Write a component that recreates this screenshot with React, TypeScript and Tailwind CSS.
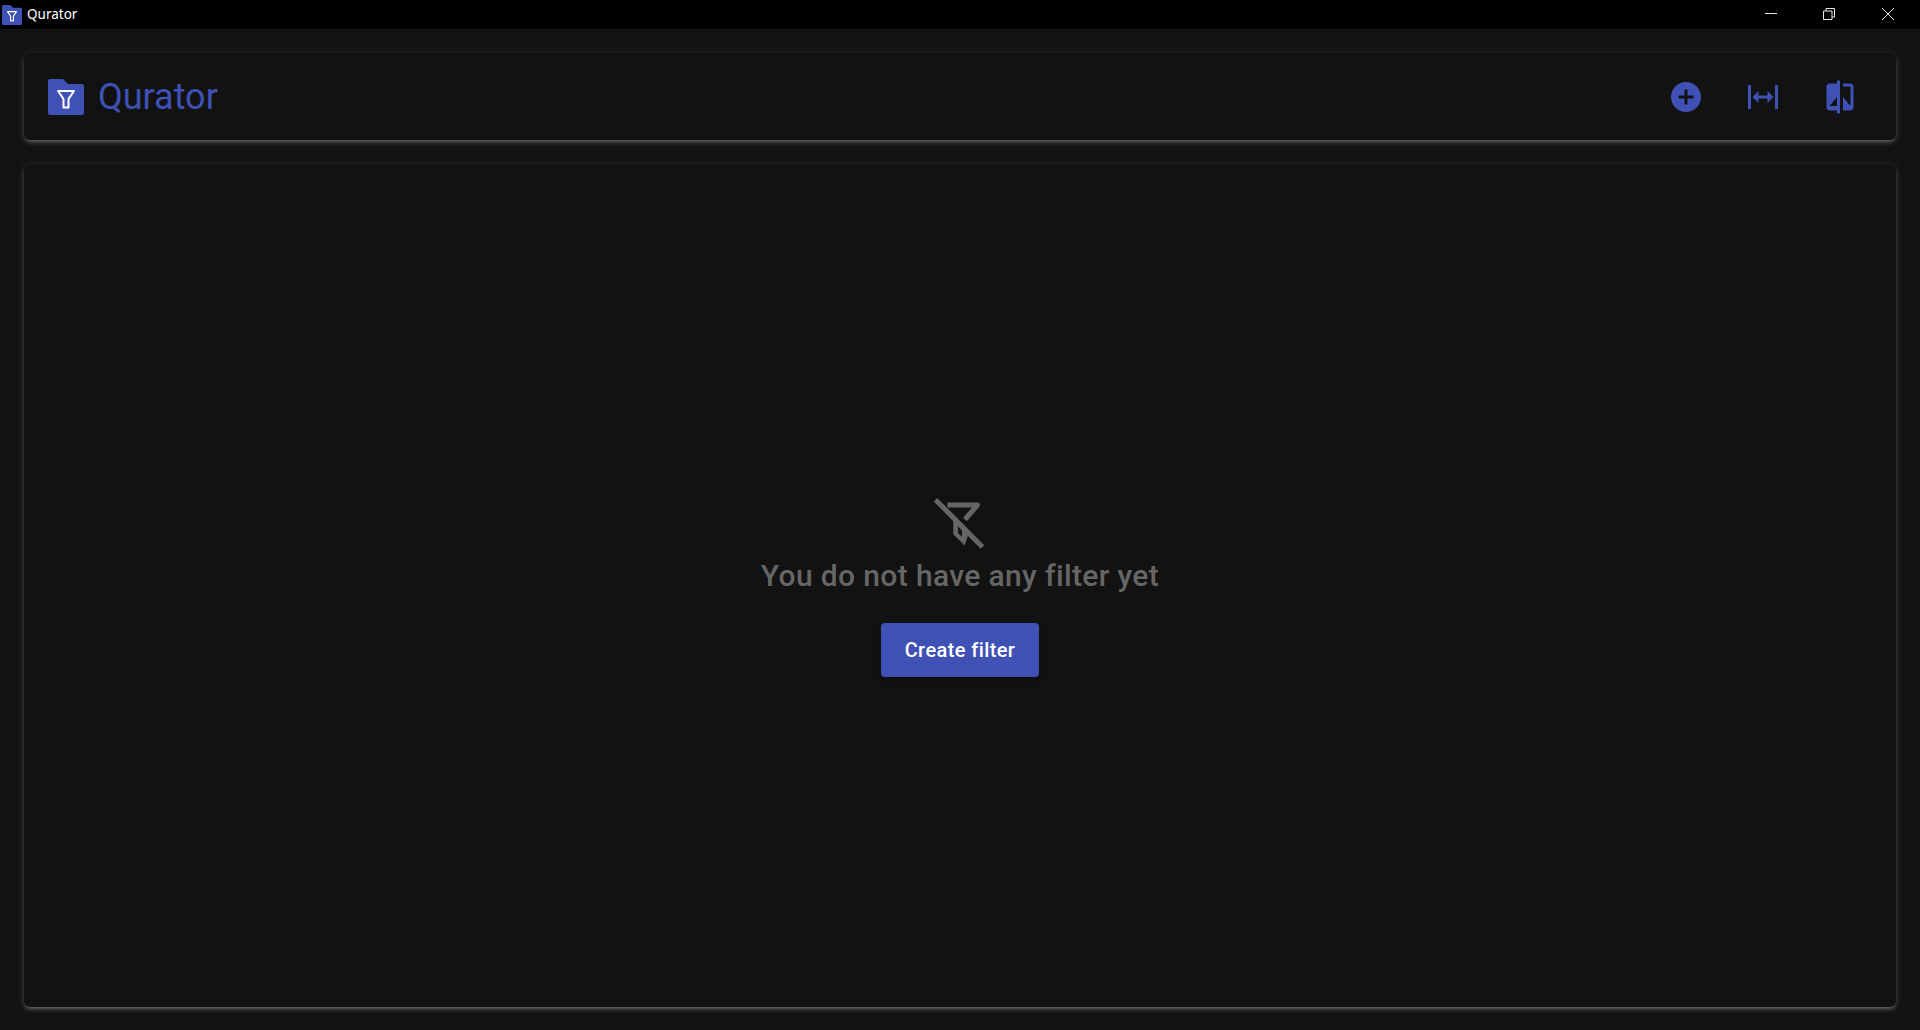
const cardShadow =
  "rounded-[6px] bg-[#121212] shadow-[0_3px_3px_-2px_rgba(255,255,255,0.2),0_3px_4px_0_rgba(255,255,255,0.14),0_1px_8px_0_rgba(255,255,255,0.12)]";

function LogoIcon({ size }: { size: number }) {
  return (
    <svg width={size} height={size} viewBox="0 0 36 36" className="shrink-0">
      <path
        d="M2 0h13l5 5h14a2 2 0 0 1 2 2v27a2 2 0 0 1-2 2H2a2 2 0 0 1-2-2V2a2 2 0 0 1 2-2z"
        fill="#3f51b5"
      />
      <path
        d="M10 12h16l-5.5 8v8.5h-5V20z"
        fill="none"
        stroke="#fff"
        strokeWidth="2"
        strokeLinejoin="round"
      />
    </svg>
  );
}

function BlueIcon({ d }: { d: string }) {
  return (
    <button className="flex h-9 w-9 items-center justify-center">
      <svg width="36" height="36" viewBox="0 0 24 24" fill="#3f51b5">
        <path d={d} />
      </svg>
    </button>
  );
}

export default function App() {
  return (
    <div className="flex h-[1030px] flex-col overflow-hidden bg-[#121212] font-['Roboto',sans-serif]">
      {/* Title bar */}
      <div className="flex h-[29px] shrink-0 items-center bg-black pl-[2px] pr-[3px] text-white">
        <LogoIcon size={20} />
        <span className="ml-[5px] font-['Noto_Sans',sans-serif] text-[13.5px]">Qurator</span>
        <div className="ml-auto flex">
          <div className="flex h-[29px] w-[58px] items-center justify-center pb-[1px]">
            <svg width="12" height="12" viewBox="0 0 12 12" stroke="#e8e8e8" fill="none">
              <path d="M0 5.5h12" />
            </svg>
          </div>
          <div className="flex h-[29px] w-[58px] items-center justify-center pb-[1px]">
            <svg width="12" height="12" viewBox="0 0 12 12" stroke="#e8e8e8" fill="none">
              <path d="M.5 3h8.5v8.5H.5zM3 3V.5h8.5V9H9" />
            </svg>
          </div>
          <div className="flex h-[29px] w-[59px] items-center justify-center pb-[1px]">
            <svg width="12" height="12" viewBox="0 0 12 12" stroke="#e8e8e8" fill="none">
              <path d="M0 0l12 12M12 0L0 12" />
            </svg>
          </div>
        </div>
      </div>

      <div className="flex flex-1 flex-col gap-6 px-6 pb-[23px] pt-6">
        {/* Header */}
        <div className={`${cardShadow} flex h-[87px] shrink-0 items-center pl-6 pr-[38px]`}>
          <LogoIcon size={36} />
          <h1 className="ml-[14px] text-[36px] font-normal text-[#3f51b5]">Qurator</h1>
          <div className="ml-auto flex gap-[41px]">
            <BlueIcon d="M12 2C6.48 2 2 6.48 2 12s4.48 10 10 10 10-4.48 10-10S17.52 2 12 2zm5 11h-4v4h-2v-4H7v-2h4V7h2v4h4v2z" />
            <BlueIcon d="M9,11H15V8L19,12L15,16V13H9V16L5,12L9,8V11M2,20V4H4V20H2M20,20V4H22V20H20Z" />
            <BlueIcon d="M10 3H5c-1.1 0-2 .9-2 2v14c0 1.1.9 2 2 2h5v2h2V1h-2v2zm0 15H5l5-6v6zm9-15h-5v2h5v13l-5-6v9h5c1.1 0 2-.9 2-2V5c0-1.1-.9-2-2-2z" />
          </div>
        </div>

        {/* Empty state */}
        <div className={`${cardShadow} flex flex-1 flex-col items-center justify-center pb-[2px]`}>
          <svg width="60" height="60" viewBox="0 0 24 24" fill="none" stroke="#666" strokeWidth="2">
            <path d="M2.2 2.7 21 21.6" />
            <path d="M7 4.8h12l-5 5.8" strokeLinejoin="round" />
            <path
              d="M9.3 10.5V16.5L13.9 21 15.2 17ZM11.2 13.2 12.8 15V17.6L11.2 16Z"
              fill="#666"
              fillRule="evenodd"
              stroke="none"
            />
          </svg>
          <p className="mt-[3px] text-[30px] font-medium leading-[40px] tracking-[0.36px] text-[#666]">
            You do not have any filter yet
          </p>
          <button className="mt-[27px] h-[54px] w-[158px] rounded-[4px] bg-[#3f51b5] text-[20px] font-medium tracking-[0.4px] text-white shadow-[0_3px_1px_-2px_rgba(0,0,0,0.2),0_2px_2px_0_rgba(0,0,0,0.14),0_1px_5px_0_rgba(0,0,0,0.12)]">
            Create filter
          </button>
        </div>
      </div>
    </div>
  );
}
